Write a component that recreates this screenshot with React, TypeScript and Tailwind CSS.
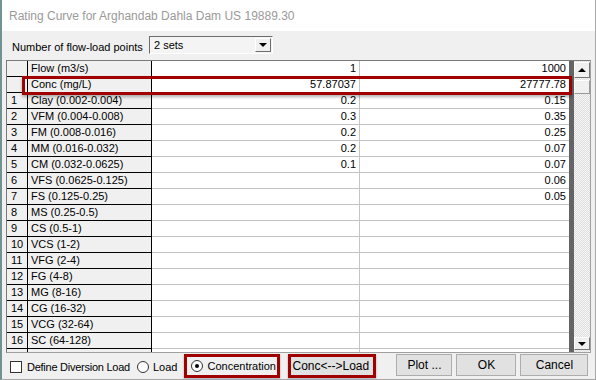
import React from 'react';

const rows: [string, string, string][] = [
  ['Clay (0.002-0.004)', '0.2', '0.15'],
  ['VFM (0.004-0.008)', '0.3', '0.35'],
  ['FM (0.008-0.016)', '0.2', '0.25'],
  ['MM (0.016-0.032)', '0.2', '0.07'],
  ['CM (0.032-0.0625)', '0.1', '0.07'],
  ['VFS (0.0625-0.125)', '', '0.06'],
  ['FS (0.125-0.25)', '', '0.05'],
  ['MS (0.25-0.5)', '', ''],
  ['CS (0.5-1)', '', ''],
  ['VCS (1-2)', '', ''],
  ['VFG (2-4)', '', ''],
  ['FG (4-8)', '', ''],
  ['MG (8-16)', '', ''],
  ['CG (16-32)', '', ''],
  ['VCG (32-64)', '', ''],
  ['SC (64-128)', '', ''],
  ['', '', ''],
];

function GridRow({ num, label, a, b }: { num: string; label: string; a: string; b: string }) {
  return (
    <div className="flex h-[16px] shrink-0 leading-[15px]">
      <div className="w-[21px] pl-[4px] bg-[#f0f0f0] border-r border-b border-black">{num}</div>
      <div className="w-[124px] pl-[3px] bg-[#f0f0f0] border-r border-b border-black whitespace-nowrap">{label}</div>
      <div className="w-[208px] pr-[3px] text-right bg-white border-r border-b border-[#c4c4c4]">{a}</div>
      <div className="w-[209px] pr-[3px] text-right bg-white border-b border-[#c4c4c4]">{b}</div>
    </div>
  );
}

function Radio({ checked }: { checked?: boolean }) {
  return (
    <span className="w-[12px] h-[12px] shrink-0 rounded-full border border-[#333] bg-white flex items-center justify-center">
      {checked && <span className="w-[4px] h-[4px] rounded-full bg-black" />}
    </span>
  );
}

function Button({ children, w }: { children: React.ReactNode; w: string }) {
  return (
    <div className={`${w} h-[22px] shrink-0 bg-[#e1e1e1] border border-[#adadad] flex items-center justify-center text-[12px]`}>
      {children}
    </div>
  );
}

export default function App() {
  return (
    <div className="w-[596px] h-[380px] flex flex-col bg-[#f0f0f0] border-l-2 border-l-[#6f9393] border-r border-r-[#a8a8a8] border-b border-b-[#a8a8a8] font-['Liberation_Sans',Arial,sans-serif] text-[11px] text-black overflow-hidden whitespace-nowrap">
      <div className="h-[31px] shrink-0 bg-white flex items-center pl-[7px] text-[12px] text-[#9a9a9a]">
        Rating Curve for Arghandab Dahla Dam US 19889.30
      </div>

      <div className="h-[29px] shrink-0 flex items-start">
        <span className="ml-[10px] mt-[8px] w-[137px]">Number of flow-load points</span>
        <div className="mt-[5px] w-[124px] h-[18px] flex items-center border border-t-[#6d6d6d] border-l-[#6d6d6d] border-b-white border-r-white bg-[#f4f4f4] pl-[4px]">
          <span className="flex-1">2 sets</span>
          <div className="w-[16px] h-[14px] mr-[1px] bg-[#f0f0f0] border border-t-white border-l-white border-b-[#6d6d6d] border-r-[#6d6d6d] flex items-center justify-center">
            <span className="w-0 h-0 border-l-[4px] border-r-[4px] border-t-[4px] border-l-transparent border-r-transparent border-t-black" />
          </div>
        </div>
      </div>

      <div className="relative ml-[4px] w-[585px] h-[293px] shrink-0 flex border border-t-[#7a7a7a] border-l-[#7a7a7a] border-b-[#a0a0a0] border-r-[#a0a0a0] overflow-hidden">
        <div className="flex flex-col w-[562px]">
          <GridRow num="" label="Flow (m3/s)" a="1" b="1000" />
          <GridRow num="" label="Conc (mg/L)" a="57.87037" b="27777.78" />
          {rows.map((r, i) => (
            <GridRow key={i} num={r[0] ? String(i + 1) : ''} label={r[0]} a={r[1]} b={r[2]} />
          ))}
        </div>
        <div className="w-[5px] bg-[#646464]" />
        <div className="w-[16px] flex flex-col bg-[repeating-conic-gradient(#f6f6f6_0_25%,#dedede_0_50%)] bg-[length:2px_2px]">
          <div className="mt-[1px] h-[16px] bg-[#f0f0f0] border border-t-white border-l-white border-b-[#777] border-r-[#777] flex items-center justify-center">
            <span className="w-0 h-0 border-l-[4px] border-r-[4px] border-b-[4px] border-l-transparent border-r-transparent border-b-black" />
          </div>
          <div className="mt-[2px] h-[14px] bg-[#f0f0f0] border border-t-white border-l-white border-b-[#999] border-r-[#999]" />
          <div className="flex-1" />
          <div className="mb-[2px] h-[13px] bg-[#f0f0f0] border border-t-white border-l-white border-b-[#777] border-r-[#777] flex items-center justify-center">
            <span className="w-0 h-0 border-l-[4px] border-r-[4px] border-t-[4px] border-l-transparent border-r-transparent border-t-black" />
          </div>
        </div>
        <div className="absolute left-[15px] top-[15px] w-[550px] h-[19px] border-[3px] border-[#a00000] shadow-[0_2px_3px_rgba(0,0,0,0.3)]" />
      </div>

      <div className="flex items-start pt-[1px] text-[11px]">
        <div className="h-[24px] shrink-0 flex items-center ml-[8px] pt-[2px]">
          <span className="w-[12px] h-[12px] shrink-0 border border-[#333] bg-white" />
          <span className="ml-[5px] tracking-[-0.25px]">Define Diversion Load</span>
        </div>
        <div className="h-[24px] shrink-0 flex items-center ml-[7px] pt-[2px]">
          <Radio />
          <span className="ml-[4px]">Load</span>
        </div>
        <div className="h-[24px] shrink-0 flex items-center ml-[7px] w-[96px] border-[3px] border-[#a00000] pl-[4px] shadow-[0_1px_2px_rgba(0,0,0,0.3)]">
          <Radio checked />
          <span className="ml-[4px]">Concentration</span>
        </div>
        <div className="h-[24px] shrink-0 ml-[8px] w-[88px] border-[3px] border-[#a00000] bg-[#e1e1e1] flex items-center pl-[1px] text-[12px] shadow-[0_1px_2px_rgba(0,0,0,0.3)]">
          Conc&lt;--&gt;Load
        </div>
        <div className="ml-[20px] flex gap-[4px]">
          <Button w="w-[56px]">Plot ...</Button>
          <Button w="w-[60px]">OK</Button>
          <Button w="w-[68px]">Cancel</Button>
        </div>
      </div>
    </div>
  );
}
